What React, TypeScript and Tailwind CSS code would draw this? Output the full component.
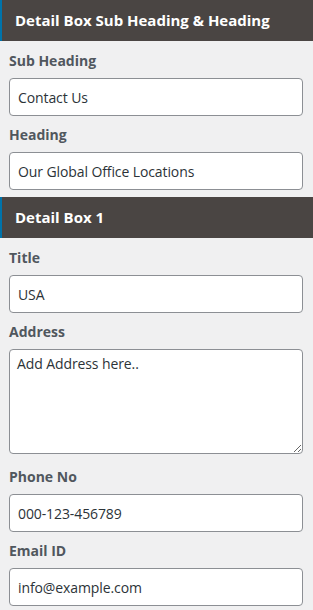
import { ReactNode } from "react";

const font = { fontFamily: "'Open Sans', 'Noto Sans', sans-serif" };

const SectionHeader = ({ title }: { title: string }) => (
  <div className="h-[41px] flex items-center bg-[#4a4543] border-l-2 border-[#0073aa] pl-[13px]">
    <span className="text-[15px] font-bold text-white">{title}</span>
  </div>
);

const Label = ({ children }: { children: ReactNode }) => (
  <div className="h-5 flex items-center text-[14px] font-bold text-[#50575e]">{children}</div>
);

const Field = ({ label, value }: { label: string; value: string }) => (
  <div className="flex flex-col">
    <Label>{label}</Label>
    <input
      readOnly
      value={value}
      className="mt-2 h-[38px] w-full rounded-[4px] border border-[#8c8f94] bg-white px-2 text-[14px] text-[#2c3338] outline-none tracking-[-0.1px]"
    />
  </div>
);

export default function App() {
  return (
    <div className="w-[313px] h-[610px] bg-[#f0f0f1] overflow-hidden" style={font}>
      <SectionHeader title="Detail Box Sub Heading & Heading" />
      <div className="flex flex-col gap-2 px-[9px] pt-[9px] pb-[7px] pr-[10px]">
        <Field label="Sub Heading" value="Contact Us" />
        <Field label="Heading" value="Our Global Office Locations" />
      </div>
      <SectionHeader title="Detail Box 1" />
      <div className="flex flex-col gap-2 px-[9px] pt-[9px] pr-[10px]">
        <Field label="Title" value="USA" />
        <div className="flex flex-col mb-1">
          <Label>Address</Label>
          <textarea
            readOnly
            value="Add Address here.."
            className="mt-2 h-[105px] w-full rounded-[4px] border border-[#8c8f94] bg-white px-[7px] py-[3px] text-[14px] text-[#2c3338] outline-none tracking-[-0.1px]"
          />
        </div>
        <Field label="Phone No" value="000-123-456789" />
        <Field label="Email ID" value="info@example.com" />
      </div>
    </div>
  );
}
